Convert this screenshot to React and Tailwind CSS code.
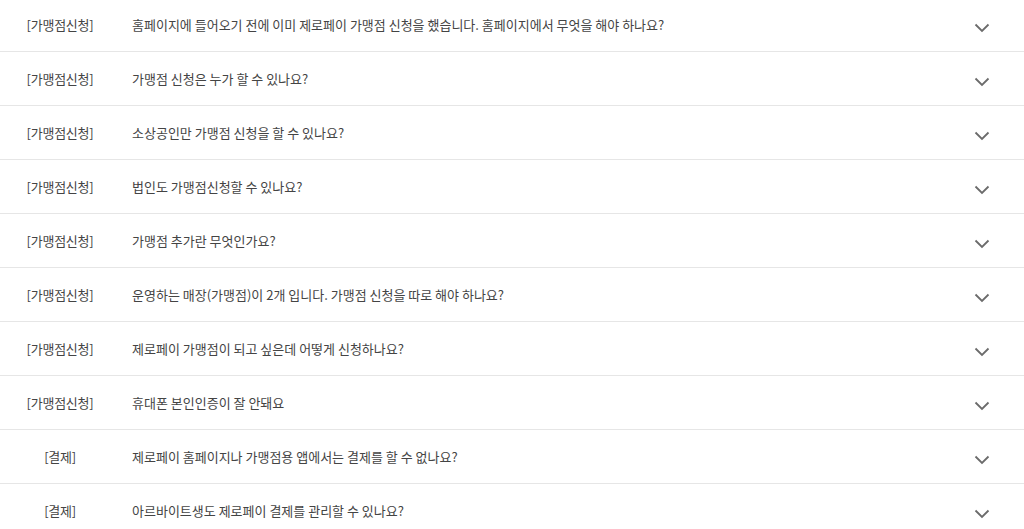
import React from 'react';

const faqs = [
  { cat: '[가맹점신청]', q: '홈페이지에 들어오기 전에 이미 제로페이 가맹점 신청을 했습니다. 홈페이지에서 무엇을 해야 하나요?' },
  { cat: '[가맹점신청]', q: '가맹점 신청은 누가 할 수 있나요?' },
  { cat: '[가맹점신청]', q: '소상공인만 가맹점 신청을 할 수 있나요?' },
  { cat: '[가맹점신청]', q: '법인도 가맹점신청할 수 있나요?' },
  { cat: '[가맹점신청]', q: '가맹점 추가란 무엇인가요?' },
  { cat: '[가맹점신청]', q: '운영하는 매장(가맹점)이 2개 입니다. 가맹점 신청을 따로 해야 하나요?' },
  { cat: '[가맹점신청]', q: '제로페이 가맹점이 되고 싶은데 어떻게 신청하나요?' },
  { cat: '[가맹점신청]', q: '휴대폰 본인인증이 잘 안돼요' },
  { cat: '[결제]', q: '제로페이 홈페이지나 가맹점용 앱에서는 결제를 할 수 없나요?' },
  { cat: '[결제]', q: '아르바이트생도 제로페이 결제를 관리할 수 있나요?' },
];

const Chevron = () => (
  <svg width="16" height="10" viewBox="0 0 16 10" className="mt-[6px] shrink-0">
    <path d="M1.5 1.5 L8 8 L14.5 1.5" fill="none" stroke="#6b6b6b" strokeWidth="1.8" />
  </svg>
);

export default function App() {
  return (
    <div className="w-[1024px] h-[529px] overflow-hidden bg-white font-['Noto_Sans_CJK_KR',sans-serif]">
      <ul className="-mt-[2px]">
        {faqs.map((item, i) => (
          <li key={i} className="h-[54px] flex items-center border-b border-[#e6e6e6] pr-[34px] text-[13px] text-[#444]">
            <span className="w-[120px] text-center shrink-0 tracking-[-0.02em]">{item.cat}</span>
            <span className="ml-[12px] flex-1">{item.q}</span>
            <Chevron />
          </li>
        ))}
      </ul>
    </div>
  );
}
